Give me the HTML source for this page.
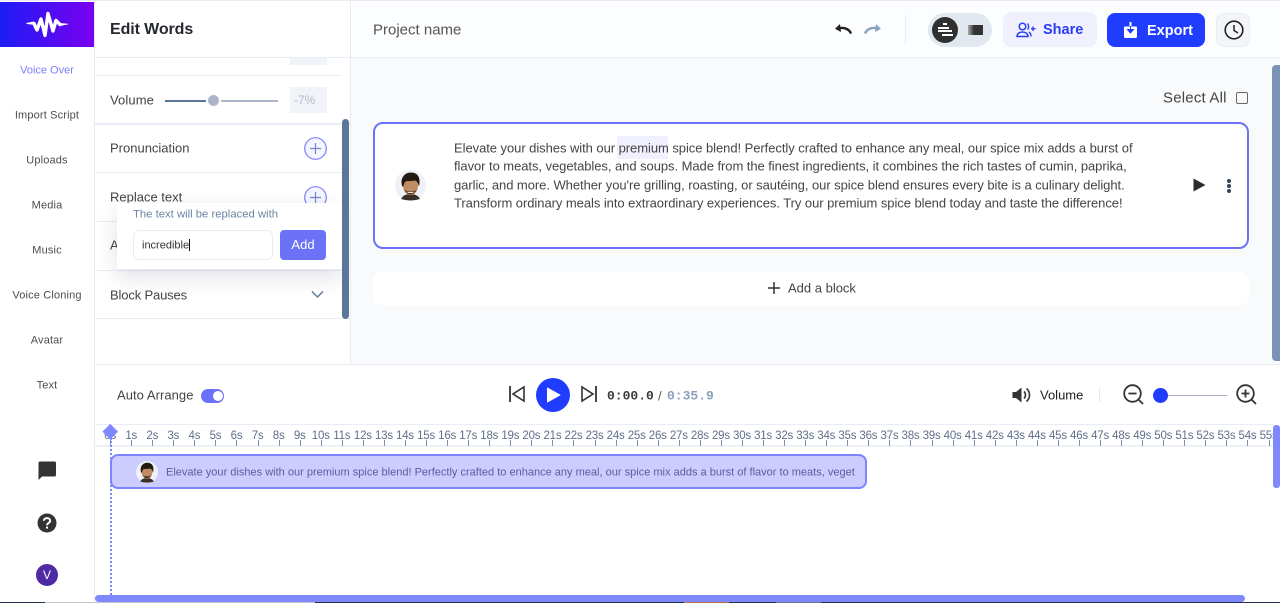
<!DOCTYPE html>
<html><head><meta charset="utf-8"><style>
*{box-sizing:border-box;margin:0;padding:0}
html,body{width:1280px;height:603px;overflow:hidden;background:#fff}
body{position:relative;font-family:"Liberation Sans",sans-serif;color:#444}
.a{position:absolute}
.t{position:absolute;white-space:nowrap;transform:translateY(-50%);line-height:1}
.n{position:absolute;left:0;width:94px;text-align:center;font-size:11px;color:#4c4c4c;transform:translateY(-50%);line-height:1;white-space:nowrap;letter-spacing:.15px}
.l{position:absolute;height:1px;background:#e8edf5}
#r{position:absolute;left:99.6px;top:425px;width:1173px;height:21px;overflow:hidden;display:flex}
#r i{flex:0 0 21.07px;width:21.07px;position:relative;font-style:normal;font-size:11.5px;color:#5f6f8a;text-align:center;line-height:22px;white-space:nowrap;letter-spacing:-.2px}
#r i:after{content:"";position:absolute;left:10.5px;top:15px;width:1px;height:6px;background:#7d92b0}
.m{font-size:13px;color:#444}
.b{letter-spacing:-.055px}
</style></head><body>
<div class="a" style="left:0;top:0;width:1280px;height:1px;background:#f1e8f2"></div>

<div class="a" style="left:0;top:2px;width:94px;height:45px;background:linear-gradient(90deg,#1c1cf5,#7a00ef)"></div>
<svg class="a" style="left:24px;top:10px" width="46" height="28" viewBox="0 0 46 28"><path d="M2 13L10 11.500 11 15 3 14ZM36 13L44 13.800 44 14.400 36 16Z" fill="#fff"/><path d="M10 13.500L13 20 17 9 21 25.500 24 3.500 29 21 32 10.500 36 14.500" fill="none" stroke="#fff" stroke-width="3.400" stroke-linejoin="round" stroke-linecap="round"/></svg>
<div class="a" style="left:94px;top:0;width:1px;height:603px;background:#e8edf5"></div>

<div class="n" style="top:71px;color:#7b7ffc;letter-spacing:0">Voice Over</div>
<div class="n" style="top:116px">Import Script</div>
<div class="n" style="top:161px">Uploads</div>
<div class="n" style="top:206px">Media</div>
<div class="n" style="top:251px">Music</div>
<div class="n" style="top:296px">Voice Cloning</div>
<div class="n" style="top:341px">Avatar</div>
<div class="n" style="top:386px">Text</div>
<svg class="a" style="left:37px;top:460px" width="20" height="20" viewBox="0 0 20 20"><path d="M1.500 3Q1.500 1.500 3 1.500H17.500Q19 1.500 19 3V15Q19 16.500 17.500 16.500H5L1.500 20Z" fill="#333"/></svg>
<svg class="a" style="left:37px;top:513px" width="20" height="20" viewBox="0 0 20 20"><circle cx="10" cy="10" r="9.500" fill="#333"/><path d="M6.800 7.800C6.800 4.300 13.200 4.300 13.200 7.800C13.200 10 10 10 10 12.300" fill="none" stroke="#fff" stroke-width="2"/><rect x="9" y="13.600" width="2" height="2" fill="#fff"/></svg>
<div class="a" style="left:36px;top:564px;width:22px;height:22px;border-radius:50%;background:#4f2aa5;color:#fff;font-size:12px;text-align:center;line-height:23px">V</div>

<div class="a" style="left:350px;top:0;width:1px;height:365px;background:#e8edf5"></div>
<div class="t" style="left:110px;top:29.500px;font-size:16px;font-weight:700;color:#26292f;letter-spacing:-.1px">Edit Words</div>
<div class="l" style="left:95px;top:57px;width:1185px"></div>
<div class="a" style="left:290px;top:58px;width:37px;height:7px;background:#f0f3f8"></div>
<div class="l" style="left:95px;top:75px;width:247px"></div>
<div class="t m" style="left:110px;top:99.500px;letter-spacing:.1px">Volume</div>
<div class="a" style="left:165px;top:100px;width:41px;height:1.500px;background:#5c7699"></div>
<div class="a" style="left:221px;top:100px;width:57px;height:1.500px;background:#aab6c8"></div>
<div class="a" style="left:208px;top:95px;width:11px;height:11px;border-radius:50%;background:#aab6c8"></div>
<div class="a" style="left:290px;top:87px;width:37px;height:26px;background:#f0f3f8;color:#b3bdcc;font-size:12px;line-height:26px;padding-left:4px">-7%</div>
<div class="l" style="left:95px;top:123px;width:255px;height:2px"></div>
<div class="t m" style="left:110px;top:148px">Pronunciation</div>
<svg class="a" style="left:304px;top:137px" width="23" height="23" viewBox="0 0 23 23"><circle cx="11.500" cy="11.500" r="10.800" fill="#f5f5ff" stroke="#7b7ffc" stroke-width="1.200"/><path d="M11.500 6V17M6 11.500H17" stroke="#7b86c8" stroke-width="1.200"/></svg>
<div class="l" style="left:95px;top:172px;width:255px"></div>
<div class="t m" style="left:110px;top:197px">Replace text</div>
<svg class="a" style="left:304px;top:186px" width="23" height="23" viewBox="0 0 23 23"><circle cx="11.500" cy="11.500" r="10.800" fill="#f5f5ff" stroke="#7b7ffc" stroke-width="1.200"/><path d="M11.500 6V17M6 11.500H17" stroke="#7b86c8" stroke-width="1.200"/></svg>
<div class="l" style="left:95px;top:221px;width:255px"></div>
<div class="t m" style="left:110px;top:245px">A</div>
<div class="l" style="left:95px;top:270px;width:255px"></div>
<div class="t m" style="left:110px;top:294.500px;letter-spacing:-.15px">Block Pauses</div>
<svg class="a" style="left:311px;top:290px" width="13" height="9" viewBox="0 0 13 9"><path d="M1 1.500L6.500 7 12 1.500" fill="none" stroke="#5c7699" stroke-width="1.400"/></svg>
<div class="l" style="left:95px;top:318px;width:255px"></div>
<div class="a" style="left:117px;top:203px;width:225px;height:66px;background:#fff;box-shadow:0 8px 22px rgba(60,70,100,.16)"></div>
<div class="t" style="left:133px;top:214.500px;font-size:11.300px;color:#6b84a5">The text will be replaced with</div>
<div class="a" style="left:133px;top:230px;width:140px;height:30px;border:1px solid #e8edf5;border-radius:6px;background:#fff"></div>
<div class="t" style="left:142px;top:245.500px;font-size:11px;color:#333">incredible</div>
<div class="a" style="left:189px;top:239px;width:1px;height:12px;background:#111"></div>
<div class="a" style="left:280px;top:230px;width:46px;height:30px;background:#6c72f8;border-radius:4px;color:#fff;font-size:13px;text-align:center;line-height:30px">Add</div>
<div class="a" style="left:342px;top:119px;width:7px;height:200px;border-radius:4px;background:#5c7699"></div>

<div class="a" style="left:351px;top:1px;width:929px;height:56px;background:#fcfdfe"></div>
<div class="t" style="left:373px;top:29.500px;font-size:15px;color:#555">Project name</div>
<svg class="a" style="left:834px;top:23px" width="18" height="11" viewBox="0 0 18 11"><path d="M17 10.500C15 5.500 9 4 4.500 5.500" fill="none" stroke="#222" stroke-width="2.400"/><path d="M1 5.800L6 1 7 9Z" fill="#222"/></svg>
<svg class="a" style="left:864px;top:23px" width="18" height="11" viewBox="0 0 18 11"><path d="M1 10.500C3 5.500 9 4 13.500 5.500" fill="none" stroke="#8ba3c2" stroke-width="2.400"/><path d="M17 5.800L12 1 11 9Z" fill="#8ba3c2"/></svg>
<div class="a" style="left:905px;top:15px;width:1px;height:30px;background:#e8edf5"></div>
<div class="a" style="left:928px;top:13px;width:64px;height:34px;border-radius:17px;background:#e2e8f0"></div>
<div class="a" style="left:932px;top:17px;width:26px;height:26px;border-radius:50%;background:#303030"></div>
<div class="a" style="left:943px;top:23px;width:4px;height:2px;background:#fff"></div>
<div class="a" style="left:938px;top:27px;width:11px;height:2px;background:#fff"></div>
<div class="a" style="left:938px;top:30px;width:14px;height:2px;background:#fff"></div>
<div class="a" style="left:942px;top:34px;width:11px;height:2px;background:#fff"></div>
<div class="a" style="left:968px;top:25px;width:15px;height:10px;background:linear-gradient(90deg,#aaa,#333 40%)"></div>
<div class="a" style="left:1003px;top:12px;width:94px;height:35px;border-radius:8px;background:#f0f0fe"></div>
<svg class="a" style="left:1016px;top:22px" width="20" height="16" viewBox="0 0 20 16"><circle cx="6.500" cy="4.500" r="3.300" fill="none" stroke="#2b3ef5" stroke-width="1.500"/><path d="M1 14.500C1 8.500 12 8.500 12 14.500Z" fill="none" stroke="#2b3ef5" stroke-width="1.500"/><path d="M11.500 1.500C13 3 13 6 11.500 7.500M13 10C14.500 11 15 12.500 15 14.500M17 4.500V9M15 6.700H19.500" fill="none" stroke="#2b3ef5" stroke-width="1.400"/></svg>
<div class="t" style="left:1043px;top:30px;font-size:14.500px;font-weight:700;color:#2b3ef5">Share</div>
<div class="a" style="left:1107px;top:13px;width:98px;height:34px;border-radius:8px;background:#1f3cff"></div>
<svg class="a" style="left:1123px;top:22px" width="15" height="17" viewBox="0 0 15 17"><path d="M2 4.500H13Q14 4.500 14 6V14.500Q14 16 12.500 16H2.500Q1 16 1 14.500V6Q1 4.500 2 4.500Z" fill="#fff"/><path d="M7.500 1V10M4.500 7.500L7.500 11 10.500 7.500Z" fill="#1f3cff" stroke="#1f3cff"/><path d="M7.500 0V4" stroke="#fff" stroke-width="2"/></svg>
<div class="t" style="left:1147px;top:30.500px;font-size:14.500px;font-weight:700;color:#fff">Export</div>
<div class="a" style="left:1216px;top:13px;width:34px;height:34px;border-radius:8px;background:#f3f5f9;border:1px solid #e9edf3"></div>
<svg class="a" style="left:1223.500px;top:20px" width="20" height="20" viewBox="0 0 20 20"><circle cx="10" cy="10" r="8.800" fill="none" stroke="#222" stroke-width="1.600"/><path d="M10 5V10.500L14 13" fill="none" stroke="#222" stroke-width="1.500"/></svg>

<div class="a" style="left:351px;top:58px;width:929px;height:306px;background:#f9fafc"></div>
<div class="a" style="left:1272px;top:65px;width:8px;height:296px;border-radius:4px 0 0 4px;background:#7a93b5"></div>
<div class="t" style="left:1163px;top:97.500px;font-size:15px;color:#444;letter-spacing:.2px">Select All</div>
<div class="a" style="left:1236px;top:91.500px;width:12px;height:12px;border:1.500px solid #666;border-radius:2px"></div>
<div class="a" style="left:373px;top:122px;width:876px;height:127px;border:2px solid #6c72f8;border-radius:10px;background:#fff"></div>
<div class="a" style="left:617px;top:136px;width:51px;height:23px;background:#f0f0fe"></div>
<svg class="a" style="left:395px;top:170px" width="31" height="31" viewBox="0 0 31 31"><circle cx="15.500" cy="15.500" r="15.500" fill="#eef1f6"/><path d="M6 29C8 25 12 24 15.500 24S23 25 25 29Q15.500 32 6 29Z" fill="#3a3029"/><ellipse cx="15.500" cy="15.500" rx="7.500" ry="9.500" fill="#c08d63"/><path d="M7.500 17C4.500 9 9 2.500 16 2.500S26 8 24 16.500C23 13 22 11 20 10.500 15 11.500 11.500 10.500 10 12 9 13.500 9 15.500 7.500 17Z" fill="#241a14"/><path d="M9.500 19C11 26 20 26 21.500 19 19.500 22 18 21.500 15.500 21.500S11.500 22 9.500 19Z" fill="#4a3022"/><path d="M12.500 22.500H18.500" stroke="#eadccf" stroke-width="1"/></svg>
<div class="t m b" style="left:454px;top:147.800px">Elevate your dishes with our premium spice blend! Perfectly crafted to enhance any meal, our spice mix adds a burst of</div>
<div class="t m b" style="left:454px;top:166px">flavor to meats, vegetables, and soups. Made from the finest ingredients, it combines the rich tastes of cumin, paprika,</div>
<div class="t m b" style="left:454px;top:185px">garlic, and more. Whether you're grilling, roasting, or sautéing, our spice blend ensures every bite is a culinary delight.</div>
<div class="t m b" style="left:454px;top:203px">Transform ordinary meals into extraordinary experiences. Try our premium spice blend today and taste the difference!</div>
<svg class="a" style="left:1193px;top:178px" width="13" height="14" viewBox="0 0 13 14"><path d="M0.500 0.500V13.500L12.500 7Z" fill="#2c2c2c"/></svg>
<div class="a" style="left:1226.500px;top:178.500px;width:4px;height:4px;border-radius:50%;background:#34435c"></div>
<div class="a" style="left:1226.500px;top:183.500px;width:4px;height:4px;border-radius:50%;background:#34435c"></div>
<div class="a" style="left:1226.500px;top:188.500px;width:4px;height:4px;border-radius:50%;background:#34435c"></div>
<div class="a" style="left:373px;top:272px;width:876px;height:33px;border-radius:8px;background:#fff"></div>
<svg class="a" style="left:767px;top:281px" width="14" height="14" viewBox="0 0 14 14"><path d="M7 1V13M1 7H13" stroke="#333" stroke-width="1.500"/></svg>
<div class="t m" style="left:788px;top:288px">Add a block</div>
<div class="l" style="left:95px;top:364px;width:1185px"></div>

<div class="t m" style="left:117px;top:395px;letter-spacing:.05px">Auto Arrange</div>
<div class="a" style="left:201px;top:389px;width:23px;height:14px;border-radius:7px;background:#6c72f8"></div>
<div class="a" style="left:213px;top:391px;width:10px;height:10px;border-radius:50%;background:#fff"></div>
<svg class="a" style="left:508px;top:385px" width="18" height="18" viewBox="0 0 18 18"><path d="M2 1V17" stroke="#333" stroke-width="1.800"/><path d="M16 2V16L5 9Z" fill="none" stroke="#333" stroke-width="1.600"/></svg>
<div class="a" style="left:536px;top:378px;width:34px;height:34px;border-radius:50%;background:#1f3cff"></div>
<svg class="a" style="left:546px;top:386px" width="16" height="18" viewBox="0 0 16 18"><path d="M1.500 2V16L14 9Z" fill="#fff" stroke="#fff" stroke-linejoin="round" stroke-width="1"/></svg>
<svg class="a" style="left:580px;top:385px" width="18" height="18" viewBox="0 0 18 18"><path d="M16 1V17" stroke="#333" stroke-width="1.800"/><path d="M2 2V16L13 9Z" fill="none" stroke="#333" stroke-width="1.600"/></svg>
<div class="t" style="left:607px;top:395.500px;font-size:13px;font-weight:700;font-family:'Liberation Mono',monospace;color:#3a3a3a">0:00.0</div>
<div class="t" style="left:658px;top:395.500px;font-size:13px;color:#555">/</div>
<div class="t" style="left:667px;top:395.500px;font-size:13px;font-weight:700;font-family:'Liberation Mono',monospace;color:#8ba0bd">0:35.9</div>
<svg class="a" style="left:1012px;top:386px" width="19" height="18" viewBox="0 0 19 18"><path d="M0.500 6H4L9.500 1.500V16.500L4 12H0.500Z" fill="#333"/><path d="M12 5.500C14 7.500 14 10.500 12 12.500M14.500 2.500C18.500 6 18.500 12 14.500 15.500" fill="none" stroke="#333" stroke-width="1.600"/></svg>
<div class="t" style="left:1040px;top:395px;font-size:13px;color:#222">Volume</div>
<div class="a" style="left:1099px;top:388px;width:1px;height:14px;background:#e4e8ee"></div>
<svg class="a" style="left:1123px;top:384px" width="21" height="21" viewBox="0 0 21 21"><circle cx="9.500" cy="9.500" r="8.300" fill="none" stroke="#333" stroke-width="1.800"/><path d="M15.500 15.500L20 20" stroke="#333" stroke-width="1.800"/><path d="M5.500 9.500H13.500" stroke="#333" stroke-width="1.800"/></svg>
<div class="a" style="left:1167px;top:394.500px;width:60px;height:1.500px;background:#a8b3c8"></div>
<div class="a" style="left:1153px;top:388px;width:15px;height:15px;border-radius:50%;background:#1f3cff"></div>
<svg class="a" style="left:1236px;top:384px" width="21" height="21" viewBox="0 0 21 21"><circle cx="9.500" cy="9.500" r="8.300" fill="none" stroke="#333" stroke-width="1.800"/><path d="M15.500 15.500L20 20" stroke="#333" stroke-width="1.800"/><path d="M5.500 9.500H13.500M9.500 5.500V13.500" stroke="#333" stroke-width="1.800"/></svg>

<div class="l" style="left:95px;top:424px;width:1178px"></div>
<div class="l" style="left:95px;top:445px;width:1178px;height:2px;background:#eef2f8"></div>
<div id="r"><i>0s</i><i>1s</i><i>2s</i><i>3s</i><i>4s</i><i>5s</i><i>6s</i><i>7s</i><i>8s</i><i>9s</i><i>10s</i><i>11s</i><i>12s</i><i>13s</i><i>14s</i><i>15s</i><i>16s</i><i>17s</i><i>18s</i><i>19s</i><i>20s</i><i>21s</i><i>22s</i><i>23s</i><i>24s</i><i>25s</i><i>26s</i><i>27s</i><i>28s</i><i>29s</i><i>30s</i><i>31s</i><i>32s</i><i>33s</i><i>34s</i><i>35s</i><i>36s</i><i>37s</i><i>38s</i><i>39s</i><i>40s</i><i>41s</i><i>42s</i><i>43s</i><i>44s</i><i>45s</i><i>46s</i><i>47s</i><i>48s</i><i>49s</i><i>50s</i><i>51s</i><i>52s</i><i>53s</i><i>54s</i><i>55s</i></div>
<div class="a" style="left:1273px;top:425px;width:7px;height:63px;border-radius:3px;background:#7f88ff"></div>
<div class="a" style="left:110px;top:454px;width:757px;height:35px;border:2px solid #7b85ff;border-radius:8px;background:#ccccff"></div>
<svg class="a" style="left:136px;top:461px" width="22" height="22" viewBox="0 0 31 31"><circle cx="15.500" cy="15.500" r="15.500" fill="#eef1f6"/><path d="M6 29C8 25 12 24 15.500 24S23 25 25 29Q15.500 32 6 29Z" fill="#3a3029"/><ellipse cx="15.500" cy="15.500" rx="7.500" ry="9.500" fill="#c08d63"/><path d="M7.500 17C4.500 9 9 2.500 16 2.500S26 8 24 16.500C23 13 22 11 20 10.500 15 11.500 11.500 10.500 10 12 9 13.500 9 15.500 7.500 17Z" fill="#241a14"/><path d="M9.500 19C11 26 20 26 21.500 19 19.500 22 18 21.500 15.500 21.500S11.500 22 9.500 19Z" fill="#4a3022"/></svg>
<div class="t" style="left:166px;top:472.500px;font-size:11.030px;color:#5c5c9c">Elevate your dishes with our premium spice blend! Perfectly crafted to enhance any meal, our spice mix adds a burst of flavor to meats, veget</div>
<div class="a" style="left:110px;top:438px;width:0;height:157px;border-left:2px dotted #7b85ff"></div>
<div class="a" style="left:105.200px;top:426px;width:10.500px;height:10.500px;background:#7f88ff;transform:rotate(45deg)"></div>
<div class="a" style="left:95px;top:595px;width:1150px;height:7px;border-radius:4px;background:#7f88ff"></div>
<div class="a" style="left:0;top:602px;width:1280px;height:1px;background:#24304f"></div>
<div class="a" style="left:45px;top:602px;width:270px;height:1px;background:#c4c6c8"></div>
<div class="a" style="left:684px;top:602px;width:45px;height:1px;background:#c0714a"></div>
<div class="a" style="left:776px;top:602px;width:45px;height:1px;background:#6a7390"></div>
</body></html>
